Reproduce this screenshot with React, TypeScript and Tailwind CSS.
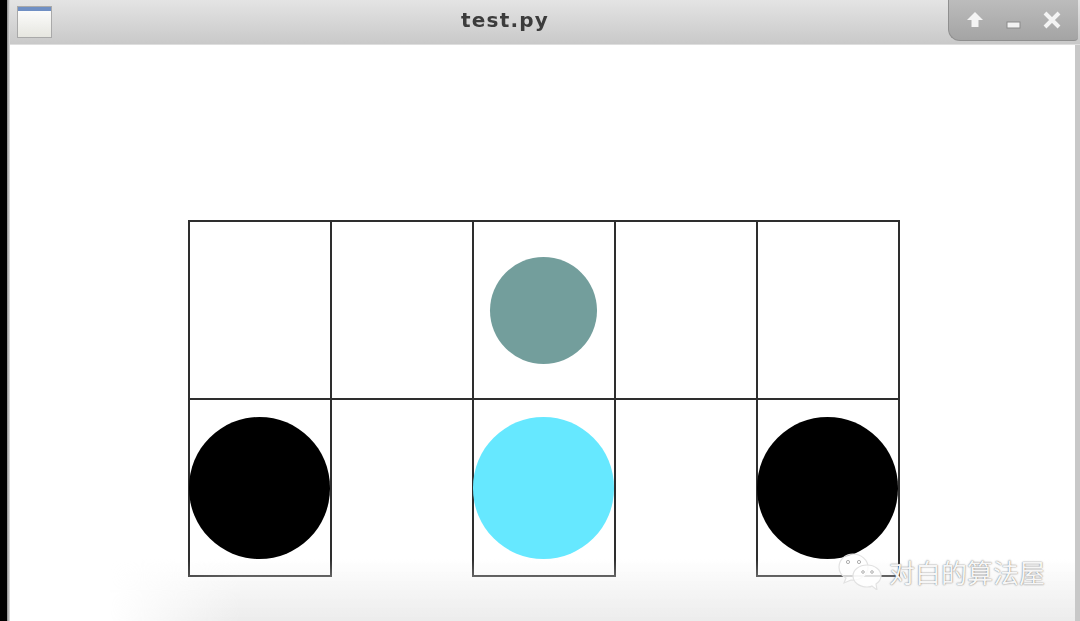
const cells = [
  { circle: '' },
  { circle: '' },
  { circle: 'w-[107px] h-[107px] bg-[#739e9c]' },
  { circle: '' },
  { circle: '' },
  { circle: 'w-[141px] h-[142px] bg-black' },
  { circle: '', open: true },
  { circle: 'w-[141px] h-[142px] bg-[#66e8ff]' },
  { circle: '', open: true },
  { circle: 'w-[141px] h-[142px] bg-black' },
];

function WindowIcon() {
  return (
    <div className="w-[35px] h-[32px] ml-[7px] flex flex-col border border-[#a9a9a9] bg-gradient-to-b from-white to-[#e6e6e0] blur-[0.4px]">
      <div className="h-[4px] bg-[#6f8fc4]" />
    </div>
  );
}

function WindowButtons() {
  return (
    <div className="w-[130px] h-[41px] self-start flex items-center pl-[16px] rounded-bl-[12px] rounded-br-[4px] border-l border-b border-[#8f8f8f] bg-gradient-to-b from-[#bcbcbc] to-[#a4a4a4]">
      <svg width="20" height="20" viewBox="0 0 20 20" className="blur-[0.5px]">
        <path d="M10 2 L18 10 L13.5 10 L13.5 17 L6.5 17 L6.5 10 L2 10 Z" fill="#f4f4f4" />
      </svg>
      <svg width="16" height="10" viewBox="0 0 16 10" className="ml-[21px] mt-[9px] blur-[0.5px]">
        <rect x="1" y="2" width="13" height="6" fill="#f2f2f2" stroke="#8a8a8a" />
      </svg>
      <svg width="20" height="20" viewBox="0 0 20 20" className="ml-[20px] blur-[0.5px]">
        <path d="M3 3 L17 17 M17 3 L3 17" stroke="#f4f4f4" strokeWidth="4" />
      </svg>
    </div>
  );
}

function WechatMark() {
  return (
    <svg width="44" height="37" viewBox="0 0 44 37" fill="none" stroke="#e2e2e2" strokeWidth="1.2">
      <path d="M15 1 C7 1 1 7 1 14 C1 19 4 23 8 25 L6 30 L13 27 C22 28 30 22 30 14 C30 7 23 1 15 1 Z" fill="rgba(255,255,255,0.72)" />
      <path d="M29 12 C21 12 15 17 15 23 C15 29 21 34 29 34 C31 34 33 34 34 33 L39 37 L38 31 C41 29 43 26 43 23 C43 17 37 12 29 12 Z" fill="rgba(255,255,255,0.8)" />
      <circle cx="10" cy="9" r="1.6" stroke="#9a9a9a" strokeWidth="0.8" />
      <circle cx="21" cy="9" r="1.6" stroke="#9a9a9a" strokeWidth="0.8" />
      <circle cx="25" cy="19" r="1.3" stroke="#9a9a9a" strokeWidth="0.8" />
      <circle cx="34" cy="19" r="1.3" stroke="#9a9a9a" strokeWidth="0.8" />
    </svg>
  );
}

export default function App() {
  return (
    <div className="relative w-[1080px] h-[621px] overflow-hidden flex bg-[#c8c8c8] font-['Liberation_Sans',sans-serif]">
      <div className="w-[7px] bg-black" />
      <div className="w-[3px] bg-gradient-to-r from-[#8a8a8a] to-[#e4e4e4]" />

      <div className="w-[1070px] flex flex-col">
        <div className="h-[45px] flex items-center bg-gradient-to-b from-[#e4e4e4] to-[#c9c9c9] border-b border-[#dedede]">
          <WindowIcon />
          <span className="ml-[409px] w-[487px] pb-[4px] text-[20px] leading-none font-bold tracking-[1.2px] text-[#3c3c3c] blur-[0.7px] font-['DejaVu_Sans',sans-serif]">
            test.py
          </span>
          <WindowButtons />
        </div>

        {/* tkinter canvas */}
        <div className="flex-1 mr-[5px] bg-white pt-[175px] pl-[178px]">
          <div className="w-[712px] grid grid-cols-[repeat(5,142px)] grid-rows-[178px_177px] border-t-2 border-l-2 border-[#2e2e2e]">
            {cells.map((cell, i) => (
              <div
                key={i}
                className={`flex items-center justify-center border-r-2 border-[#2e2e2e] ${cell.open ? '' : 'border-b-2'}`}
              >
                {cell.circle && <div className={`rounded-full shrink-0 mr-[2px] ${cell.circle}`} />}
              </div>
            ))}
          </div>
        </div>
      </div>

      {/* bottom shading of the photographed screen */}
      <div className="absolute left-[110px] right-[5px] bottom-0 h-[62px] bg-gradient-to-t from-[#ececec] to-transparent [mask-image:linear-gradient(to_right,transparent,black_130px)]" />

      {/* watermark */}
      <div className="absolute right-[35px] bottom-[31px] flex items-center gap-[7px] text-[26px] leading-none text-[#f6f6f6] [text-shadow:0_0_1.5px_#555] font-['Noto_Sans_CJK_SC',sans-serif]">
        <WechatMark />
        <span>对白的算法屋</span>
      </div>
    </div>
  );
}
